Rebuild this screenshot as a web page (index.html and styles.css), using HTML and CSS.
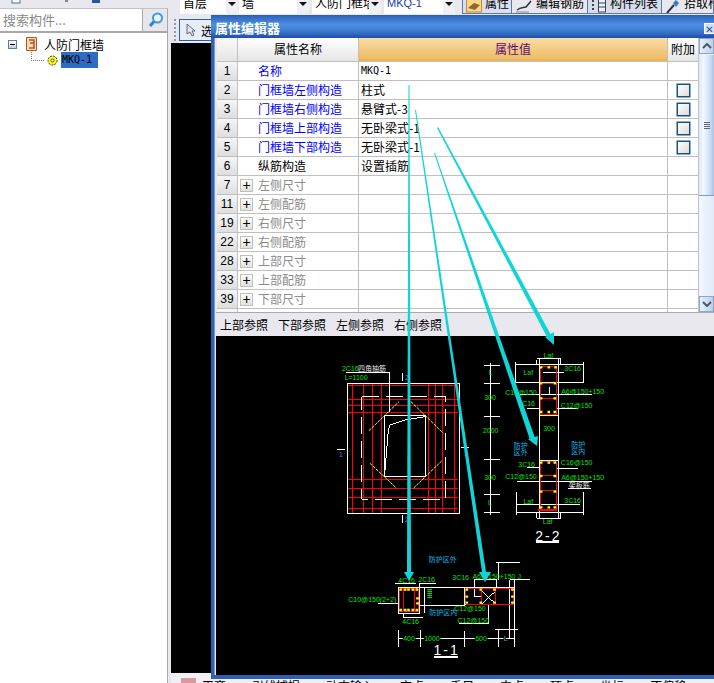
FILE: index.html
```html
<!DOCTYPE html>
<html lang="zh">
<head>
<meta charset="utf-8">
<title>属性编辑器</title>
<link rel="stylesheet" href="styles.css">
</head>
<body>
<div class="app">
  <aside class="side">
    <div class="side-tools">
      <svg class="side-tools-art" width="110" height="8" viewBox="0 0 110 8"><rect x="12" y="-4" width="8" height="7" fill="#fff" stroke="#50709c"/><rect x="65" y="-3" width="3" height="5" fill="#888"/><rect x="92" y="-4" width="8" height="7" fill="#2a56a0"/></svg>
    </div>
    <div class="search">
      <div class="search-input">搜索构件...</div>
      <svg class="search-icon" width="16" height="16" viewBox="0 0 16 16"><circle cx="9.500" cy="6" r="4.500" fill="#eaf6ff" stroke="#3d9bd8" stroke-width="2"/><path d="M6 9.500 2 14" stroke="#2f86c6" stroke-width="3"/></svg>
    </div>
    <div class="tree">
      <div class="tree-root">
        <span class="tree-toggle"></span>
        <svg width="11" height="14" viewBox="0 0 11 14"><path d="M.5.5h10v13H.5z" fill="#f6d9b8" stroke="#b4561c"/><path d="M3 3h5v3H4M8 6v5H3" fill="none" stroke="#b4561c" stroke-width="1.500"/></svg>
        <span>人防门框墙</span>
      </div>
      <div class="tree-child">
        <span class="tree-dots"></span>
        <svg width="13" height="13" viewBox="0 0 13 13"><circle cx="6.500" cy="6.500" r="4.500" fill="#ff0" stroke="#333" stroke-dasharray="2 1"/><circle cx="6.500" cy="6.500" r="1.600" fill="#fff" stroke="#555"/></svg>
        <span class="tree-selected">MKQ-1</span>
      </div>
    </div>
  </aside>

  <main class="main">
    <div class="toolbar">
      <div class="combo combo-a"><span>首层</span><i class="drop"></i></div>
      <div class="combo combo-b"><span>墙</span><i class="drop"></i></div>
      <div class="combo combo-c"><span>人防门框墙</span><i class="drop"></i></div>
      <div class="combo combo-d"><span class="combo-link">MKQ-1</span><i class="drop"></i></div>
      <div class="tool tool-active tool-a">
        <svg width="16" height="14" viewBox="0 0 16 14"><rect x=".5" y="-3" width="15" height="15" fill="#fbd68c" stroke="#c98a2c"/><path d="M2 8 8 3l6 2-5 5z" fill="#8f6a2a"/></svg><span>属性</span></div>
      <div class="tool tool-b">
        <svg width="18" height="14" viewBox="0 0 18 14"><path d="M2 10C6 7 8 8 11 7L16 1" fill="none" stroke="#333" stroke-width="1.500"/><path d="M1 12h13" stroke="#888"/></svg><span>编辑钢筋</span></div>
      <div class="tool tool-c">
        <svg width="16" height="14" viewBox="0 0 16 14"><path d="M1 1h3M1 5h3M1 9h3" stroke="#444" stroke-width="2" stroke-dasharray="2 1"/><rect x="7.500" y="-2" width="7" height="14" fill="#eef" stroke="#345"/><path d="M8 3h6M8 7h6" stroke="#345"/></svg><span>构件列表</span></div>
      <div class="tool tool-d">
        <svg width="16" height="14" viewBox="0 0 16 14"><path d="M2 13 9 5" stroke="#335" stroke-width="2"/><path d="M8 3l3-3 3 3-3 4z" fill="#3a78c8"/></svg><span>拾取构件</span></div>
    </div>
    <div class="toolbar2">
      <span class="grip"></span>
      <div class="select-btn">
        <svg width="10" height="14" viewBox="0 0 10 14"><path d="M1 1v10l3-2 2 4 2-1-2-4h3z" fill="#dfe6f2" stroke="#667"/></svg>
        <span>选择</span>
      </div>
    </div>
    <div class="viewport"></div>
    <div class="statusbar">
      <i class="status-icon"></i><span>平齐</span><span>引线捕捉</span><span>动态输入</span><span>交点</span><span>垂足</span><span>中点</span><span>顶点</span><span>坐标</span><span>不偏移</span>
    </div>
  </main>

  <section class="dialog">
    <header class="dialog-title">
      <span>属性编辑器</span>
      <span class="close">✕</span>
    </header>
    <div class="dialog-body">
      <div class="grid-wrap">
        <div class="grid">
          <div class="row head">
            <div class="c-no"></div><div class="c-name">属性名称</div><div class="c-val">属性值</div><div class="c-add">附加</div>
          </div>
          <div class="row"><div class="c-no">1</div><div class="c-name link">名称</div><div class="c-val mono">MKQ-1</div><div class="c-add"></div></div>
          <div class="row"><div class="c-no">2</div><div class="c-name link">门框墙左侧构造</div><div class="c-val">柱式</div><div class="c-add"><i class="check"></i></div></div>
          <div class="row"><div class="c-no">3</div><div class="c-name link">门框墙右侧构造</div><div class="c-val">悬臂式-3</div><div class="c-add"><i class="check"></i></div></div>
          <div class="row"><div class="c-no">4</div><div class="c-name link">门框墙上部构造</div><div class="c-val">无卧梁式-1</div><div class="c-add"><i class="check"></i></div></div>
          <div class="row"><div class="c-no">5</div><div class="c-name link">门框墙下部构造</div><div class="c-val">无卧梁式-1</div><div class="c-add"><i class="check"></i></div></div>
          <div class="row"><div class="c-no">6</div><div class="c-name">纵筋构造</div><div class="c-val">设置插筋</div><div class="c-add"></div></div>
          <div class="row"><div class="c-no">7</div><div class="c-name group"><i class="plus">+</i>左侧尺寸</div><div class="c-val"></div><div class="c-add"></div></div>
          <div class="row"><div class="c-no">11</div><div class="c-name group"><i class="plus">+</i>左侧配筋</div><div class="c-val"></div><div class="c-add"></div></div>
          <div class="row"><div class="c-no">19</div><div class="c-name group"><i class="plus">+</i>右侧尺寸</div><div class="c-val"></div><div class="c-add"></div></div>
          <div class="row"><div class="c-no">22</div><div class="c-name group"><i class="plus">+</i>右侧配筋</div><div class="c-val"></div><div class="c-add"></div></div>
          <div class="row"><div class="c-no">28</div><div class="c-name group"><i class="plus">+</i>上部尺寸</div><div class="c-val"></div><div class="c-add"></div></div>
          <div class="row"><div class="c-no">33</div><div class="c-name group"><i class="plus">+</i>上部配筋</div><div class="c-val"></div><div class="c-add"></div></div>
          <div class="row"><div class="c-no">39</div><div class="c-name group"><i class="plus">+</i>下部尺寸</div><div class="c-val"></div><div class="c-add"></div></div>
          <div class="row"><div class="c-no"></div><div class="c-name"></div><div class="c-val"></div><div class="c-add"></div></div>
        </div>
        <div class="scroll">
          <div class="scroll-btn"><svg width="10" height="6" viewBox="0 0 10 6"><path d="M1 5l4-4 4 4" fill="none" stroke="#556" stroke-width="2"/></svg></div>
          <div class="scroll-thumb"><i></i></div>
          <div class="scroll-track"></div>
          <div class="scroll-btn"><svg width="10" height="6" viewBox="0 0 10 6"><path d="M1 1l4 4 4-4" fill="none" stroke="#556" stroke-width="2"/></svg></div>
        </div>
      </div>
      <div class="tabs"><span>上部参照</span><span>下部参照</span><span>左侧参照</span><span>右侧参照</span></div>
      <div class="canvas">
        <svg class="drawing" width="498" height="339" viewBox="216 336 498 339">
          <!-- plan view -->
          <g transform="translate(330 350) scale(.3333)">
            <path class="r" d="M55 108H385M55 148H385M55 168H385M55 188H385M55 388H385M55 415H385M55 443H385M55 475H385M67 103V490M100 103V490M127 103V490M155 103V490M295 103V490M317 103V490M337 103V490M375 103V490"/>
            <rect class="w" x="52" y="100" width="336" height="390"/>
            <rect class="w dash" x="95" y="140" width="252" height="308"/>
            <rect class="w" x="163" y="197" width="125" height="183"/>
            <path class="y" d="M117 242 207 155M243 155 340 250M120 340 200 415M335 333 250 415"/>
            <path class="w" d="M165 360 170 300 175 240 180 225 225 210 285 200M48 67H178V185M218 70V92M218 495V518M21 299H45M393 293H418"/>
            <text class="t-g" x="36" y="62">2C16</text><text class="t-w" x="84" y="62">四角抽筋</text>
            <text class="t-g" x="44" y="90">L=1100</text>
            <text class="t-b" x="27" y="320">1</text><text class="t-b" x="402" y="318">1</text>
            <text class="t-b" x="225" y="90">2</text><text class="t-b" x="225" y="515">2</text>
          </g>
          <!-- section 2-2 -->
          <g transform="translate(470 340) scale(.3333)">
            <path class="w" d="M62 70V525M42 76H90M42 130H90M42 230H90M42 360H90M42 463H90M42 518H90M208 55V535M265 55V535M200 55H272V75M200 75V60M138 75H340M138 128H340M138 65V130M340 65V130M150 165H365M170 207H208M258 205H325M208 227H265M208 362H265M170 382H208M258 385H325M140 425H365M295 447H362M140 495H330M140 518H340M140 455V525M340 455V525M200 515V535H272V515M220 97H282M240 140V165"/>
            <path class="r" d="M213 80H260V225H213ZM213 130H260M213 175H260M213 365H260V510H213ZM213 408H260M213 452H260"/>
            <path class="r thick" d="M203 510H262"/>
            <path class="dots" d="M213 82h1M236 82h1M256 82h1M213 130h1M254 130h1M213 175h1M254 175h1M213 216h1M236 216h1M254 216h1M213 368h1M236 368h1M254 368h1M213 408h1M254 408h1M213 455h1M254 455h1M213 502h1M236 502h1M254 502h1"/>
            <text class="t-g m" x="235" y="53">Laf</text><text class="t-g m" x="175" y="104">Laf</text><text class="t-g m" x="308" y="94">3C16</text>
            <text class="t-g m" x="153" y="164">C12@150</text><text class="t-g m" x="338" y="161">A6@150+150</text><text class="t-g m" x="170" y="199">3C16</text>
            <text class="t-g m" x="320" y="203">C12@150</text><text class="t-g m" x="237" y="274">300</text>
            <text class="t-g m" x="62" y="106">L</text><text class="t-g m" x="60" y="181">300</text><text class="t-g m" x="62" y="279">2000</text><text class="t-g m" x="60" y="421">300</text><text class="t-g m" x="60" y="496">L</text>
            <text class="t-c m" x="152" y="323">防护</text><text class="t-c m" x="152" y="345">区外</text>
            <text class="t-c m" x="325" y="321">防护</text><text class="t-c m" x="325" y="343">区内</text>
            <text class="t-g m" x="170" y="381">3C16</text><text class="t-g m" x="320" y="376">C16@150</text><text class="t-g m" x="153" y="418">C12@150</text><text class="t-g m" x="338" y="421">A6@150+150</text>
            <text class="t-w m" x="328" y="445">架板筋</text><text class="t-g m" x="308" y="488">3C16</text><text class="t-g m" x="175" y="491">Laf</text><text class="t-g m" x="233" y="553">Laf</text>
            <text class="t-title m" x="235" y="603">2-2</text>
            <path class="w under" d="M198 607H266"/>
          </g>
          <!-- section 1-1 -->
          <g transform="translate(340 545) scale(.3333)">
            <path class="w" d="M175 127H240V205H175ZM240 127H375M240 183H375M255 127V205M238 115H288M240 115V205M165 115H228M190 205V218H248M373 127H525V180H373ZM403 105V155H425M403 105H470V127M510 105H570M510 105V280M525 105V280M475 50V105M468 52H540M465 253H535M447 180V235H358M425 137 468 178M468 137 425 178M175 281H525M175 255V305M242 255V305M373 258V305M475 255V305M525 255V305M115 175H175"/>
            <path class="r" d="M180 132H235V200H180ZM190 132V200M225 132V200M378 132H522V178H378ZM425 132V178M468 132V178"/>
            <path class="dots" d="M182 134h1M195 134h1M205 134h1M218 134h1M230 134h1M232 160h1M232 175h1M182 195h1M195 195h1M205 195h1M218 195h1M230 195h1M380 134h1M422 134h1M463 134h1M517 134h1M380 155h1M517 155h1M380 173h1M422 173h1M463 173h1M517 173h1"/>
            <path class="coil" d="M262 134H276M262 140H276M262 146H276M262 152H276M262 158H276"/>
            <text class="t-c m" x="308" y="50">防护区外</text><text class="t-g m" x="200" y="113">4C16</text><text class="t-g m" x="260" y="112">2C16</text><text class="t-g m" x="362" y="104">3C16</text>
            <text class="t-g m" x="470" y="101">A6@150+150 J</text><text class="t-g m" x="97" y="172">C10@150(2+2)</text><text class="t-c m" x="310" y="209">防护区内</text>
            <text class="t-g m" x="390" y="199">C12@150</text><text class="t-g m" x="400" y="233">C12@150</text><text class="t-g m" x="212" y="236">4C16</text>
            <text class="t-g m bgk" x="207" y="287">400</text><text class="t-g m bgk" x="276" y="287">1000</text><text class="t-g m bgk" x="423" y="287">600</text><text class="t-g m bgk" x="497" y="287">L</text>
            <text class="t-title m" x="320" y="329">1-1</text>
            <path class="w under" d="M282 335H353"/>
          </g>
        </svg>
      </div>
    </div>
  </section>

  <svg class="arrows" width="714" height="683" viewBox="0 0 714 683">
    <polygon points="408.500,85 409.500,85 411,572 407,572"/>
    <polygon points="404,572 414,572 409,581"/>
    <polygon points="415,110 416,110 486,572 482,572"/>
    <polygon points="479,572 491,572 485,582"/>
    <polygon points="434,153 435,153 535,438 530,440"/>
    <polygon points="528,439 538,436 537,446"/>
    <polygon points="437,128 438,127 551,335 547,337"/>
    <polygon points="545,337 554,332 554,345"/>
  </svg>
</div>
</body>
</html>
```

FILE: styles.css
```css
* { box-sizing: border-box; }
html, body { margin: 0; padding: 0; }
body {
  font-family: "Noto Sans CJK SC", "Liberation Sans", sans-serif;
  font-size: 12px;
  color: #000;
  background: #e8e8ee;
}
.app {
  position: relative;
  display: flex;
  width: 714px;
  height: 683px;
  overflow: hidden;
}

/* left panel */
.side {
  width: 171px;
  flex: none;
  display: flex;
  flex-direction: column;
  border-right: 3px solid #e8e8ee;
}
.side-tools { height: 8px; overflow: hidden; background: #e8e8ee; }
.side-tools-art { display: block; }
.search {
  height: 25px;
  display: flex;
  align-items: center;
  background: #e6e6ec;
  border-top: 1px solid #c4c4c8;
  border-bottom: 2px solid #a8a8a8;
  border-right: 1px solid #a8a8a8;
}
.search-input {
  width: 143px;
  height: 22px;
  padding-left: 3px;
  line-height: 21px;
  font-size: 13px;
  color: #8a8a8a;
  background: #fff;
  border-right: 1px solid #a8a8a8;
}
.search-icon { margin-left: 5px; }
.tree {
  flex: 1;
  background: #fff;
  border-right: 1px solid #a8a8a8;
  padding: 3px 0 0 8px;
}
.tree-root { display: flex; align-items: center; height: 16px; }
.tree-root svg { margin-left: 9px; }
.tree-root span:last-child { margin-left: 7px; }
.tree-toggle {
  position: relative;
  width: 9px;
  height: 9px;
  border: 1px solid #5b7ea8;
  background: linear-gradient(#fff, #c8ccd4);
}
.tree-toggle::after {
  content: "";
  position: absolute;
  left: 1px;
  top: 3px;
  width: 5px;
  height: 1px;
  background: #000;
}
.tree-child { display: flex; align-items: center; height: 16px; padding-left: 23px; }
.tree-dots { width: 13px; height: 9px; border-left: 1px dotted #777; border-bottom: 1px dotted #777; margin-top: -8px; }
.tree-child svg { margin-left: 2px; }
.tree-selected {
  margin-left: 2px;
  width: 37px;
  height: 16px;
  padding-left: 1px;
  line-height: 16px;
  font-family: "DejaVu Sans Mono", monospace;
  font-size: 10px;
  background: #2e6bc2;
  color: #000;
}

/* main area */
.main { flex: 1; display: flex; flex-direction: column; min-width: 0; }
.toolbar {
  height: 14px;
  flex: none;
  display: flex;
  padding-left: 9px;
  overflow: hidden;
}
.combo {
  height: 14px;
  display: flex;
  justify-content: space-between;
  background: #fff;
  line-height: 6px;
  padding-left: 3px;
  overflow: hidden;
  white-space: nowrap;
}
.combo span { min-width: 0; flex: 1; overflow: hidden; height: 14px; }
.combo-a { width: 58px; }
.combo-b { width: 70px; margin-left: 1px; }
.combo-c { width: 69px; margin-left: 3px; }
.combo-d { width: 71px; margin-left: 3px; }
.combo-link { font-family: "Liberation Sans", sans-serif; color: #2040b0; font-size: 11px; }
.drop {
  position: relative;
  flex: none;
  width: 12px;
  height: 14px;
  background: #eef0f4;
}
.drop::after {
  content: "";
  position: absolute;
  left: 2px;
  top: 2px;
  border: 4px solid transparent;
  border-top: 4px solid #111;
}
.tool {
  height: 14px;
  display: flex;
  gap: 3px;
  padding-left: 3px;
  line-height: 6px;
  white-space: nowrap;
  background: #d6dcea;
  border-right: 1px solid #5b78a8;
  border-bottom: 1px solid #5b78a8;
  overflow: hidden;
}
.tool svg { flex: none; }
.tool-active { background: #d9dfec; }
.tool-a { width: 50px; margin-left: 7px; border-left: 1px solid #5b78a8; }
.tool-b { width: 76px; background: #e8e8ee; }
.tool-c { width: 74px; }
.tool-d { flex: 1; background: #e8e8ee; }
.toolbar2 {
  height: 29px;
  flex: none;
  display: flex;
  align-items: flex-start;
  padding: 5px 0 0 3px;
}
.grip {
  width: 2px;
  height: 22px;
  background: repeating-linear-gradient(#99a 0 2px, transparent 2px 4px);
}
.select-btn {
  margin-left: 3px;
  width: 50px;
  height: 22px;
  display: flex;
  align-items: center;
  gap: 5px;
  padding-left: 6px;
  border: 1px solid #2a5caa;
  background: #e6eef8;
}
.select-btn span { white-space: nowrap; }
.viewport { height: 630px; flex: none; background: #000; }
.statusbar {
  flex: 1;
  display: flex;
  gap: 26px;
  padding: 5px 0 0 10px;
  line-height: 16px;
  white-space: nowrap;
  overflow: hidden;
  background: #f0f0f4;
}
.status-icon { width: 15px; height: 14px; margin-right: -20px; background: #d89a9a; flex: none; }

/* dialog */
.dialog {
  position: absolute;
  left: 211px;
  top: 15px;
  width: 520px;
  height: 664px;
  display: flex;
  flex-direction: column;
  background: #e8e8ee;
  border: 1px solid #2f5fb0;
  border-width: 1px 3px 4px;
  box-shadow: inset 1px 0 0 #6f9be0;
}
.dialog-title {
  flex: none;
  height: 22px;
  margin: 0 -3px;
  padding: 0 0 0 4px;
  display: flex;
  align-items: center;
  font-size: 13px;
  font-weight: 700;
  color: #fff;
  background: linear-gradient(#2c66bd, #4f8fe2 40%, #3b78d0 70%, #1f4ea6);
  position: relative;
}
.close {
  position: absolute;
  left: 493px;
  top: 7px;
  width: 11px;
  height: 11px;
  line-height: 11px;
  font-size: 10px;
  text-align: center;
  background: #cfe0f6;
  color: #234f96;
  border: 1px solid #fff;
  font-family: "DejaVu Sans", sans-serif;
}
.dialog-body {
  flex: 1;
  min-height: 0;
  margin-left: 2px;
  display: flex;
  flex-direction: column;
  background: #e8e8ee;
}
.grid-wrap {
  height: 274px;
  flex: none;
  display: flex;
  padding-left: 1px;
  overflow: hidden;
}
.grid { width: 481px; flex: none; background: #fff; overflow: hidden; }
.row {
  display: flex;
  height: 19px;
  border-bottom: 1px solid #c0c0c0;
  line-height: 18px;
}
.c-no {
  width: 21px;
  flex: none;
  text-align: center;
  background: linear-gradient(#f6f6f6, #dedede);
  border-right: 1px solid #c0c0c0;
  font-family: "Liberation Sans", sans-serif;
}
.c-name {
  width: 121px;
  flex: none;
  padding-left: 20px;
  border-right: 1px solid #c0c0c0;
  white-space: nowrap;
}
.c-val {
  width: 309px;
  flex: none;
  padding-left: 2px;
  border-right: 1px solid #c0c0c0;
  white-space: nowrap;
}
.c-add {
  flex: 1;
  display: flex;
  align-items: center;
  justify-content: center;
}
.link { color: #0000ff; }
.mono { font-family: "DejaVu Sans Mono", monospace; font-size: 10px; }
.group { color: #8c8c8c; padding-left: 2px; display: flex; align-items: center; }
.plus {
  width: 13px;
  height: 13px;
  margin-right: 5px;
  font-style: normal;
  font-family: "Liberation Sans", sans-serif;
  font-size: 14px;
  line-height: 11px;
  text-align: center;
  color: #000;
  background: linear-gradient(#fdfdfd, #e2e2dc);
  border: 1px solid #c0c0c0;
}
.head { height: 24px; line-height: 22px; text-align: center; border-bottom: 1px solid #c0c0c0; }
.head .c-no { background: linear-gradient(#fafafa, #e4e4e4); }
.head .c-name { padding-left: 0; background: linear-gradient(#fff, #e6e6e6); }
.head .c-val {
  padding-left: 0;
  color: #5c0a7a;
  background: linear-gradient(#f9dda6, #efbb62);
  border-bottom: 2px solid #edb459;
}
.head .c-add { background: linear-gradient(#fff, #e6e6e6); display: block; }
.check {
  width: 13px;
  height: 13px;
  border: 1px solid #1c5180;
  background: linear-gradient(135deg, #ffffff, #dcdcd8);
  box-shadow: 0 0 0 .5px #1c5180;
}
.scroll {
  width: 16px;
  flex: none;
  display: flex;
  flex-direction: column;
  background: #eaf2fd;
  border-left: 1px solid #b9c3d4;
}
.scroll-btn {
  height: 16px;
  flex: none;
  display: flex;
  align-items: center;
  justify-content: center;
  background: linear-gradient(90deg, #e8f0fc, #bcd0ea);
  border: 1px solid #8ea6c8;
}
.scroll-thumb {
  height: 141px;
  flex: none;
  margin-top: 1px;
  display: flex;
  align-items: center;
  justify-content: center;
  background: linear-gradient(90deg, #dbe8fa, #f4f8ff 30%, #c4d8f2 80%, #a8c0e4);
  border-bottom: 1px solid #7f9cc6;
}
.scroll-thumb i {
  width: 6px;
  height: 7px;
  background: repeating-linear-gradient(#667 0 1px, transparent 1px 2px);
}
.scroll-track { flex: 1; background: linear-gradient(90deg, #f4f8ff, #dfeafb); }
.tabs {
  flex: none;
  height: 24px;
  display: flex;
  gap: 10px;
  padding: 3px 0 0 4px;
  line-height: 18px;
  background: #e8e8ee;
  border-top: 1px solid #a9a9b0;
}
.canvas { flex: 1; background: #000; min-height: 0; overflow: hidden; }
.drawing { display: block; }
.w, .r, .y { fill: none; stroke-width: 3; }
.w { stroke: #fff; shape-rendering: crispEdges; }
.r { stroke: #f00; shape-rendering: crispEdges; }
.y { stroke: #ff0; stroke-dasharray: 9 3; }
.thick { stroke-width: 6; }
.dash { stroke-dasharray: 52 20; }
.under { stroke-width: 6; }
.dots { stroke: #ff0; stroke-width: 7; stroke-linecap: square; fill: none; }
.coil { stroke: #0f0; stroke-width: 3; fill: none; }
.t-g, .t-w, .t-b, .t-c { font-family: "Liberation Sans", "Noto Sans CJK SC", sans-serif; font-size: 21px; }
.t-g { fill: #0be00b; }
.t-w { fill: #e8e8e8; }
.t-b { fill: #2f7fff; }
.t-c { fill: #10b8f0; }
.m { text-anchor: middle; }
.bgk { paint-order: stroke; stroke: #000; stroke-width: 6px; }
.t-title { font-family: "Liberation Sans", sans-serif; font-size: 42px; fill: #fff; letter-spacing: 6px; }

.arrows { position: absolute; left: 0; top: 0; pointer-events: none; }
.arrows polygon { fill: #10d4d8; }
```
